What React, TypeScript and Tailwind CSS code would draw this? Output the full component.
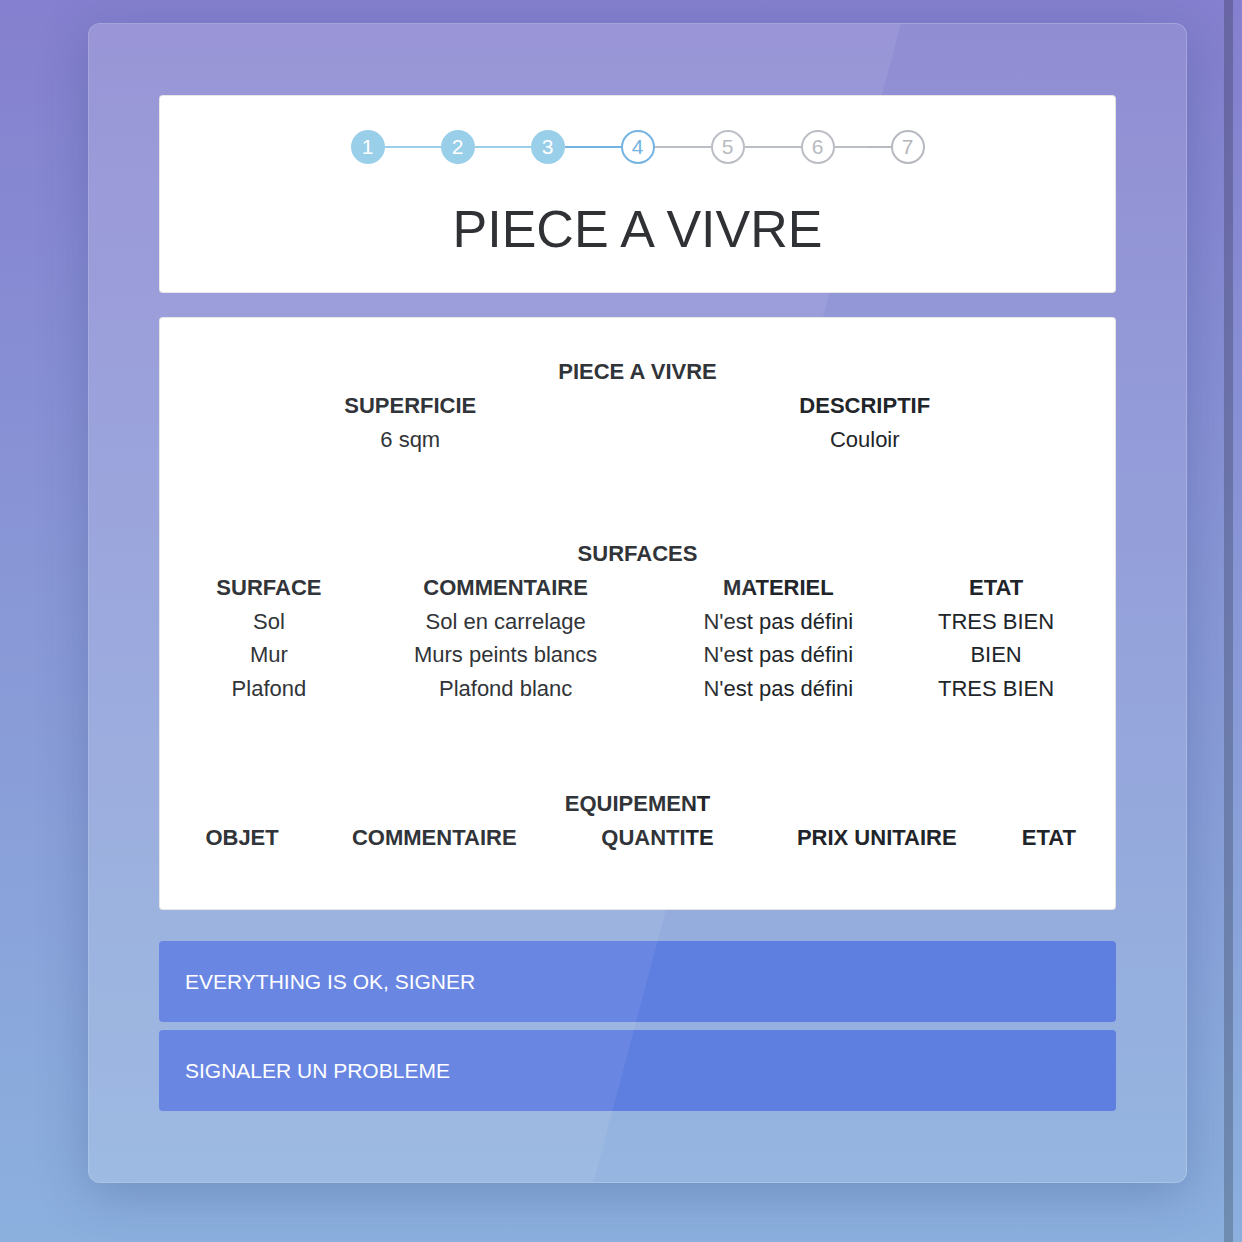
const steps = [1, 2, 3, 4, 5, 6, 7]
const current = 4

const surfaces = [
  { surface: "Sol", commentaire: "Sol en carrelage", materiel: "N'est pas défini", etat: "TRES BIEN" },
  { surface: "Mur", commentaire: "Murs peints blancs", materiel: "N'est pas défini", etat: "BIEN" },
  { surface: "Plafond", commentaire: "Plafond blanc", materiel: "N'est pas défini", etat: "TRES BIEN" },
]

function Stepper() {
  return (
    <div className="flex items-center justify-center">
      {steps.map((step, index) => {
        const done = step < current
        const active = step === current
        return (
          <div key={step} className="flex items-center">
            {index > 0 && (
              <div
                className={
                  step < current
                    ? "h-[2px] w-[56px] bg-[#92cbe8]"
                    : step === current
                      ? "h-[2px] w-[56px] bg-[#6aaee0]"
                      : "h-[2px] w-[56px] bg-[#b6b9c0]"
                }
              />
            )}
            <div
              className={
                done
                  ? "flex h-[34px] w-[34px] items-center justify-center rounded-full bg-[#92cbe8] text-[21px] text-white"
                  : active
                    ? "flex h-[34px] w-[34px] items-center justify-center rounded-full border-2 border-[#6aaee0] bg-white text-[21px] text-[#6aaee0]"
                    : "flex h-[34px] w-[34px] items-center justify-center rounded-full border-2 border-[#b6b9c0] bg-white text-[21px] text-[#b3b6bc]"
              }
            >
              {step}
            </div>
          </div>
        )
      })}
    </div>
  )
}

export default function App() {
  return (
    <div className="flex min-h-[1242px] w-full bg-linear-to-b from-[#8580cf] to-[#8bb0de] font-['Liberation_Sans',Arial,sans-serif] text-[#212529]">
      <div className="flex-1 pl-[88px] pt-[23px]">
        <div className="relative w-[1099px] overflow-hidden rounded-xl border border-white/20 bg-white/10 px-[70px] pb-[71px] pt-[71px] shadow-[0_12px_50px_rgba(30,50,110,0.25)]">
          {/* Header card */}
          <div className="rounded-[4px] border border-black/10 bg-white pb-[33px] pt-[34px]">
            <Stepper />
            <h1 className="mt-[35px] text-center text-[52px] leading-[60px] text-[#1f2226]">PIECE A VIVRE</h1>
          </div>

          {/* Details card */}
          <div className="mt-[24px] rounded-[4px] border border-black/10 bg-white px-[23px] pb-[54px] pt-[37px] text-[22px] leading-[34px]">
            <div className="text-center font-bold">PIECE A VIVRE</div>
            <div className="grid grid-cols-2 text-center">
              <div>
                <div className="font-bold">SUPERFICIE</div>
                <div>6 sqm</div>
              </div>
              <div>
                <div className="font-bold">DESCRIPTIF</div>
                <div>Couloir</div>
              </div>
            </div>

            <div className="mt-[80px] text-center font-bold">SURFACES</div>
            <div className="grid grid-cols-[172fr_302fr_244fr_192fr] text-center leading-[33.7px]">
              <div className="font-bold">SURFACE</div>
              <div className="font-bold">COMMENTAIRE</div>
              <div className="font-bold">MATERIEL</div>
              <div className="font-bold">ETAT</div>
              {surfaces.map((row) => (
                <div key={row.surface} className="contents">
                  <div>{row.surface}</div>
                  <div>{row.commentaire}</div>
                  <div>{row.materiel}</div>
                  <div>{row.etat}</div>
                </div>
              ))}
            </div>

            <div className="mt-[81px] text-center font-bold">EQUIPEMENT</div>
            <div className="grid grid-cols-[118fr_266fr_180fr_258fr_86fr] text-center font-bold">
              <div>OBJET</div>
              <div>COMMENTAIRE</div>
              <div>QUANTITE</div>
              <div>PRIX UNITAIRE</div>
              <div>ETAT</div>
            </div>
          </div>

          {/* Actions */}
          <div className="mt-[31px] flex flex-col gap-[8px]">
            <button className="h-[81px] rounded-[4px] bg-[#5e7ee0] pl-[26px] text-left text-[21px] text-white">
              EVERYTHING IS OK, SIGNER
            </button>
            <button className="h-[81px] rounded-[4px] bg-[#5e7ee0] pl-[26px] text-left text-[21px] text-white">
              SIGNALER UN PROBLEME
            </button>
          </div>

          {/* Glass glare */}
          <div className="pointer-events-none absolute inset-0 bg-white/[0.07] [clip-path:polygon(0_0,74%_0,46%_100%,0_100%)]" />
        </div>
      </div>
      <div className="w-[9px] bg-black/20" />
      <div className="w-[9px]" />
    </div>
  )
}
